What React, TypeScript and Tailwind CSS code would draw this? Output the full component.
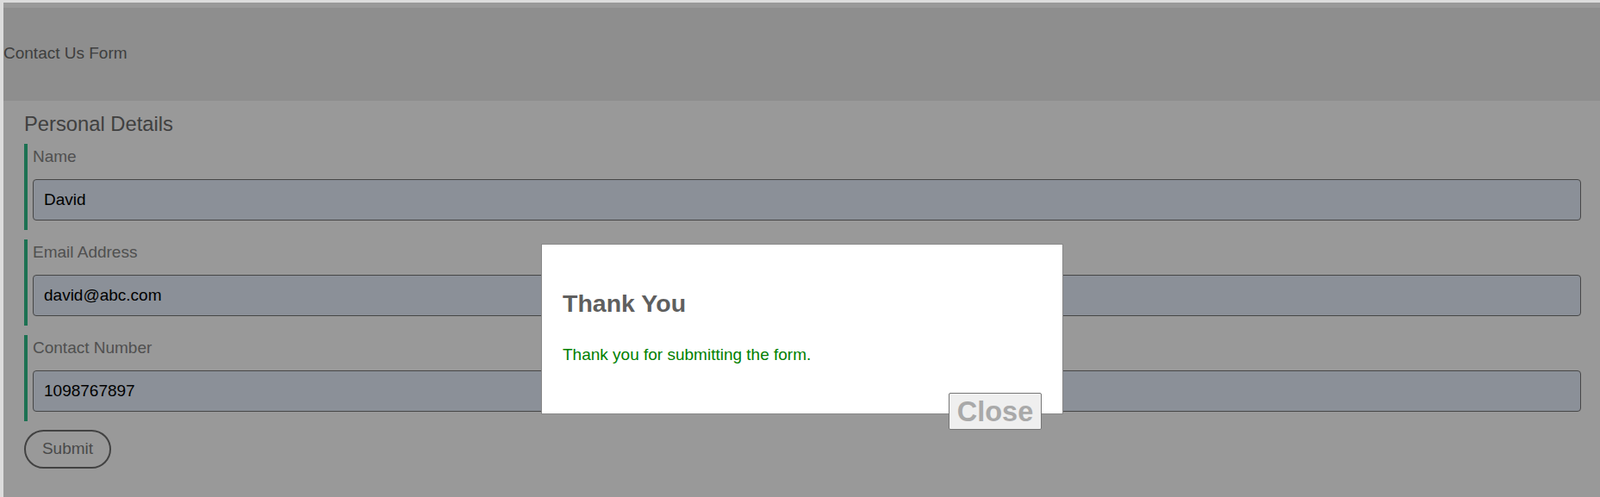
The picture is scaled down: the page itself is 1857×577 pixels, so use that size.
import React from 'react';

const fields = [
  { label: 'Name', value: 'David' },
  { label: 'Email Address', value: 'david@abc.com' },
  { label: 'Contact Number', value: '1098767897' },
];

export default function App() {
  return (
    <div className="h-[577px] overflow-hidden bg-[#dcdcdc] pl-[4px] pt-[3px] font-['Liberation_Sans',Arial,sans-serif]">
      <div className="relative h-full bg-white pt-[6px]">
        {/* page header */}
        <div className="flex h-[108px] items-center bg-[#ededed] pb-[1px] text-[19px] text-[#696969]">
          Contact Us Form
        </div>

        <form className="pl-[24px] pr-[22px]">
          <h2 className="mt-[13px] text-[23.75px] leading-[27px] text-[#6b6b6b]">Personal Details</h2>

          {fields.map((f, i) => (
            <div
              key={f.label}
              className={
                'h-[100px] border-l-4 border-[#30bd89] pl-[6px] pt-[4px] ' +
                (i === 0 ? 'mt-[10px]' : 'mt-[11px]')
              }
            >
              <label className="block text-[19px] leading-[22px] text-[#858585]">{f.label}</label>
              <input
                readOnly
                value={f.value}
                className="mt-[15px] h-[48px] w-full rounded-[4px] border border-[#767676] bg-[#e8f0fe] px-[12px] text-[19px] text-black outline-none"
              />
            </div>
          ))}

          <button
            type="button"
            className="mt-[10px] h-[45px] w-[101px] rounded-full border-2 border-[#6e6e6e] bg-transparent text-[19px] text-[#7b7b7b]"
          >
            Submit
          </button>
        </form>

        {/* dimmed backdrop */}
        <div className="absolute inset-0 bg-black/40" />

        {/* thank you dialog */}
        <div className="absolute left-[624px] top-[280px] h-[198px] w-[606px] border border-[#888] bg-white px-[24px]">
          <h2 className="mt-[52px] text-[28.5px] font-bold leading-[33px] text-[#5f5f5f]">Thank You</h2>
          <p className="mt-[32px] text-[19px] leading-[22px] text-[#008000]">Thank you for submitting the form.</p>
          <button
            type="button"
            className="absolute left-[472px] top-[172px] h-[43px] w-[108px] rounded-[2px] border border-[#767676] bg-[#efefef] pt-[2px] text-[32.5px] font-bold leading-none text-[#a9a9a9]"
          >
            Close
          </button>
        </div>
      </div>
    </div>
  );
}
